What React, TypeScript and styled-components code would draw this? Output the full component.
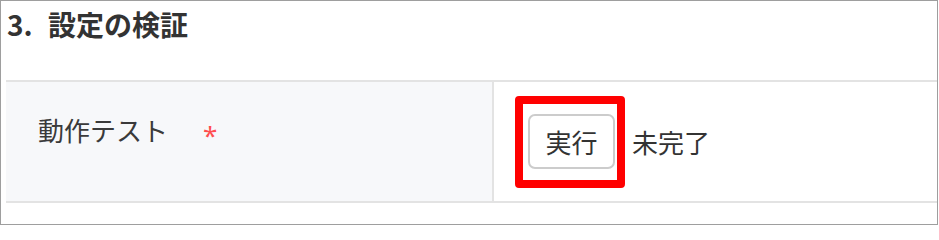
import React from 'react';
import styled, {createGlobalStyle} from 'styled-components';

const GlobalStyle = createGlobalStyle`
    html, body {
        margin: 0;
        padding: 0;
        background: #ffffff;
    }

    body {
        font-family: "Noto Sans CJK JP", "Noto Sans", sans-serif;
        color: #333333;
    }
`

const Frame = styled.div`
    box-sizing: border-box;
    width: 938px;
    height: 225px;
    border: 1px solid #9e9e9e;
    padding: 0 0 0 5px;
    display: flex;
    flex-direction: column;
    overflow: hidden;
`

const Title = styled.h2`
    margin: 0;
    padding: 4px 0 0 1px;
    height: 79px;
    box-sizing: border-box;
    font-size: 28px;
    font-weight: 700;
    line-height: 38px;
    word-spacing: 9px;
    color: #333333;
`

const Row = styled.div`
    display: grid;
    grid-template-columns: 488px 1fr;
    border-top: 2px solid #e3e3e3;
    border-bottom: 2px solid #e3e3e3;
    height: 123px;
    box-sizing: border-box;
`

const LabelCell = styled.div`
    background: #f7f8fa;
    border-right: 2px solid #e3e3e3;
    padding: 28px 0 0 32px;
    display: flex;
    align-items: flex-start;
    gap: 35px;
    font-size: 26px;
    line-height: 40px;
    color: #3a3a3a;
`

const Required = styled.span`
    margin-top: 5px;
    color: #ff4d4f;
    font-family: "Noto Sans", sans-serif;
`

const ValueCell = styled.div`
    display: flex;
    align-items: center;
    gap: 17px;
    padding-left: 34px;
    font-size: 26px;
    color: #333333;
`

const ButtonWrap = styled.div`
    position: relative;
    display: flex;
`

const Button = styled.button`
    box-sizing: border-box;
    width: 87px;
    height: 55px;
    border: 2px solid #cccccc;
    border-radius: 7px;
    background: #ffffff;
    font-family: inherit;
    font-size: 26px;
    color: #333333;
    padding: 0;
    cursor: pointer;
`

const Highlight = styled.div`
    position: absolute;
    left: -13px;
    top: -18px;
    width: 110px;
    height: 92px;
    box-sizing: border-box;
    border: 8px solid #ff0000;
    border-radius: 4px;
    pointer-events: none;
`

export default function App() {
    return (
        <>
            <GlobalStyle/>
            <Frame>
                <Title>3. 設定の検証</Title>
                <Row>
                    <LabelCell>
                        <span>動作テスト</span>
                        <Required>*</Required>
                    </LabelCell>
                    <ValueCell>
                        <ButtonWrap>
                            <Button>実行</Button>
                            <Highlight/>
                        </ButtonWrap>
                        <span>未完了</span>
                    </ValueCell>
                </Row>
            </Frame>
        </>
    );
}
